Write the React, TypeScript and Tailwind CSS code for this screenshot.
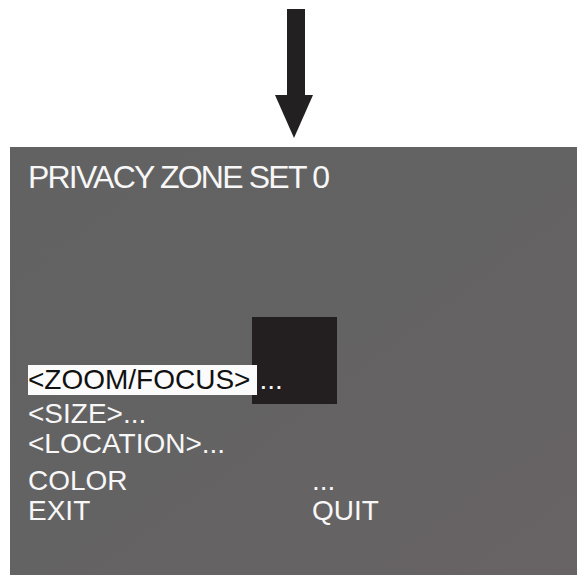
import React from 'react'

const font = { fontFamily: '"Liberation Sans", Arial, sans-serif' }

function Arrow() {
  return (
    <svg width="38" height="130" viewBox="0 0 38 130" className="ml-[275px] block">
      <rect x="12" y="0" width="18" height="87" fill="#222021" />
      <polygon points="0,86 38,86 19,129" fill="#222021" />
    </svg>
  )
}

function Row({ left, right, className = '' }: { left: React.ReactNode; right?: string; className?: string }) {
  return (
    <div className={`grid h-[30px] grid-cols-[284px_1fr] text-[28px] leading-[30px] ${className}`}>
      <div className="flex whitespace-nowrap">{left}</div>
      <div className="whitespace-nowrap">{right}</div>
    </div>
  )
}

export default function App() {
  return (
    <div className="h-[581px] w-[581px] overflow-hidden bg-white" style={font}>
      <div className="h-[147px] pt-[9px]">
        <Arrow />
      </div>
      <div className="relative ml-[10px] h-[428px] w-[567px] bg-gradient-to-br from-[#626262] via-[#646364] to-[#686364] pl-[18px] pt-[12px] text-[#f7f7f7]">
        <div className="text-[32px] leading-[36px] tracking-[-1.8px]">PRIVACY ZONE SET 0</div>

        {/* privacy mask */}
        <div className="absolute left-[242px] top-[170px] h-[87px] w-[85px] bg-[#231f20]" />

        <div className="relative mt-[170px]">
          <Row
            left={
              <>
                <span className="inline-block h-[30px] bg-[#fbfbfb] pr-[7px] text-[#111]">&lt;ZOOM/FOCUS&gt;</span>
                <span className="pl-[2px]">...</span>
              </>
            }
          />
          <Row className="mt-[4px]" left="<SIZE>..." />
          <Row left="<LOCATION>..." />
          <Row className="mt-[7px]" left="COLOR" right="..." />
          <Row left="EXIT" right="QUIT" />
        </div>
      </div>
    </div>
  )
}
